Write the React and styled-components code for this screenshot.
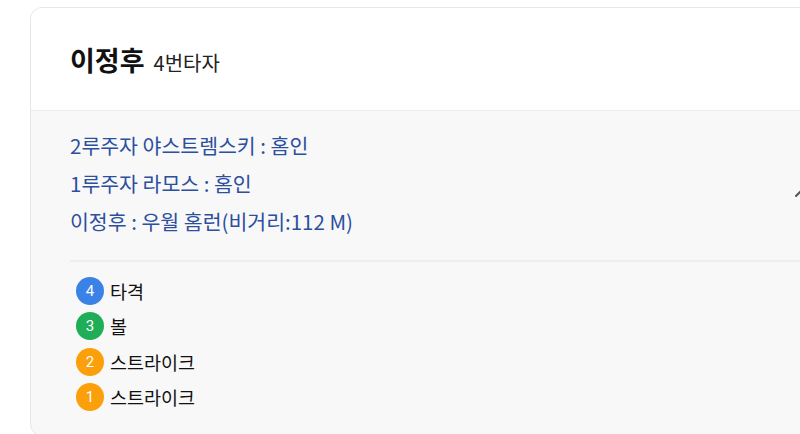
import React from "react";
import styled, { createGlobalStyle } from "styled-components";
import { ChevronUp } from "lucide-react";

const GlobalStyle = createGlobalStyle`
  html, body {
    margin: 0;
    padding: 0;
    background: #ffffff;
    overflow: hidden;
    font-family: "Noto Sans CJK KR", "Noto Sans", sans-serif;
  }
`;

const events = [
  "2루주자 야스트렘스키 : 홈인",
  "1루주자 라모스 : 홈인",
  "이정후 : 우월 홈런(비거리:112 M)",
];

const pitches = [
  { num: 4, label: "타격", color: "#3b82e6" },
  { num: 3, label: "볼", color: "#1fae57" },
  { num: 2, label: "스트라이크", color: "#fb9f0a" },
  { num: 1, label: "스트라이크", color: "#fb9f0a" },
];

export default function App() {
  return (
    <>
      <GlobalStyle />
      <Card>
        <Header>
          <Name>이정후</Name>
          <Order>4번타자</Order>
        </Header>
        <Body>
          <EventRow>
            <EventList>
              {events.map((e) => (
                <EventText key={e}>{e}</EventText>
              ))}
            </EventList>
            <Toggle>
              <ChevronUp size={24} strokeWidth={2} />
            </Toggle>
          </EventRow>
          <Divider />
          <PitchList>
            {pitches.map((p) => (
              <PitchItem key={p.num}>
                <Badge $color={p.color}>{p.num}</Badge>
                <PitchLabel>{p.label}</PitchLabel>
              </PitchItem>
            ))}
          </PitchList>
        </Body>
      </Card>
    </>
  );
}

const Card = styled.div`
  margin: 7px 0 0 30px;
  width: 822px;
  border: 1px solid #e6e6e6;
  border-radius: 12px;
  overflow: hidden;
  background: #f8f8f8;
`;

const Header = styled.div`
  display: flex;
  align-items: baseline;
  gap: 9px;
  height: 103px;
  padding: 32px 39px 0;
  box-sizing: border-box;
  background: #ffffff;
  border-bottom: 1px solid #ececec;
`;

const Name = styled.span`
  font-size: 27px;
  font-weight: 700;
  color: #111;
`;

const Order = styled.span`
  font-size: 20px;
  color: #222;
`;

const Body = styled.div`
  padding: 15px 39px 24px;
`;

const EventRow = styled.div`
  display: flex;
  align-items: center;
  justify-content: space-between;
`;

const EventList = styled.div`
  display: flex;
  flex-direction: column;
`;

const EventText = styled.div`
  font-size: 20.5px;
  line-height: 38px;
  color: #2c4f9e;
`;

const Toggle = styled.div`
  display: flex;
  color: #555;
  margin-top: 20px;
`;

const Divider = styled.div`
  height: 2px;
  background: #eeeeee;
  margin: 20px 0 15px;
`;

const PitchList = styled.div`
  display: flex;
  flex-direction: column;
  gap: 8.5px;
  padding-left: 6px;
`;

const PitchItem = styled.div`
  display: flex;
  align-items: center;
  gap: 6px;
  height: 27px;
`;

const Badge = styled.span`
  width: 28px;
  height: 28px;
  border-radius: 50%;
  background: ${(p) => p.$color};
  color: #fff;
  font-family: Roboto, "Noto Sans", sans-serif;
  font-size: 15px;
  display: flex;
  align-items: center;
  justify-content: center;
`;

const PitchLabel = styled.span`
  font-size: 18.5px;
  color: #111;
`;
